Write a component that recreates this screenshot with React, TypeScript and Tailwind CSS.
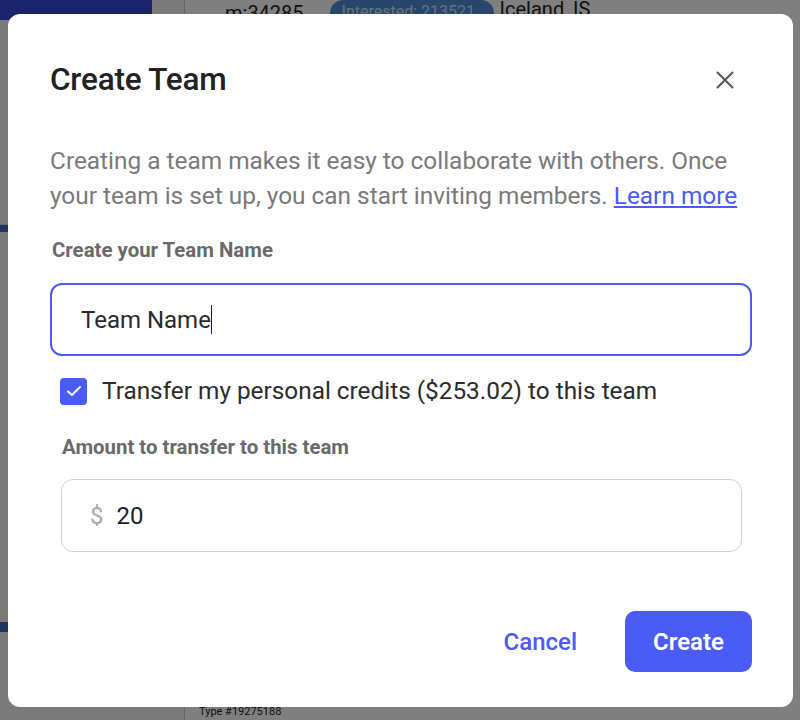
import React from 'react';

const font = { fontFamily: 'Roboto, "Noto Sans", sans-serif' };

const Backdrop: React.FC = () => (
  <div className="absolute inset-0 flex bg-white">
    <div className="w-[152px] flex flex-col">
      <div className="h-[20px] bg-[#3447d8]" />
      <div className="flex-1 bg-[#f4f4f4] flex flex-col">
        <div className="h-[205px] border-b border-[#ddd]" />
        <div className="h-[7px] bg-[#3b6fc4]" />
        <div className="h-[390px]" />
        <div className="h-[10px] bg-[#3b6fc4]" />
      </div>
    </div>
    <div className="w-[33px] border-r border-[#ccc] bg-[#f4f4f4]" />
    <div className="flex-1 flex flex-col">
      <div className="flex items-start gap-[26px] pl-[40px] h-[40px] text-[20px] text-[#222]">
        <span className="-mt-[2px]">m:34285</span>
        <span className="flex items-center gap-[6px]">
          <span className="h-[26px] w-[164px] rounded-full bg-[#4c8fd6] text-[#cfe0f4] text-[16px] px-3">Interested: 213521</span>
          <span className="-mt-[8px]">Iceland, IS</span>
        </span>
      </div>
      <div className="flex-1" />
      <div className="h-[16px] pl-[14px] text-[11px] text-[#222]">Type #19275188</div>
    </div>
  </div>
);

const App: React.FC = () => {
  return (
    <div className="relative w-[800px] h-[720px] overflow-hidden" style={font}>
      <Backdrop />
      <div className="absolute inset-0 bg-black/50" />

      <div className="absolute left-[8px] top-[14px] w-[785px] h-[693px] bg-white rounded-[12px] pt-[48px] pb-[35px] pl-[42px] pr-[41px] flex flex-col">
        <div className="flex items-center justify-between">
          <h2 className="text-[31.5px] leading-[36px] font-medium text-[#222] tracking-[-0.2px]">Create Team</h2>
          <button className="w-[34px] h-[34px] flex items-center justify-center mr-[10px]">
            <svg width="18" height="18" viewBox="0 0 18 18" fill="none" stroke="#555" strokeWidth="2" strokeLinecap="round">
              <path d="M1.5 1.5 L16.5 16.5 M16.5 1.5 L1.5 16.5" />
            </svg>
          </button>
        </div>

        <p className="mt-[45px] text-[24.4px] leading-[35px] text-[#7a7a7a]">
          Creating a team makes it easy to collaborate with others. Once your team is set up, you can start inviting members.{' '}
          <a className="text-[#4a5cf2] underline underline-offset-[2px]">Learn more</a>
        </p>

        <label className="mt-[25px] ml-[2px] text-[20.4px] leading-[24px] font-bold text-[#6a6a6a]">Create your Team Name</label>

        <div className="mt-[21px] h-[73px] rounded-[12px] border-2 border-[#4a5cf2] flex items-center pl-[29px]">
          <span className="text-[24px] text-[#2b2b2b]">Team Name</span>
          <span className="w-px h-[29px] bg-[#222]" />
        </div>

        <div className="mt-[20px] px-[10px] flex flex-col">
          <div className="flex items-center gap-[15px] h-[30px]">
            <span className="w-[27px] h-[27px] rounded-[4px] bg-[#4a5cf5] flex items-center justify-center">
              <svg width="18" height="18" viewBox="0 0 18 18" fill="none" stroke="white" strokeWidth="2" strokeLinecap="round" strokeLinejoin="round">
                <path d="M3 9.5 L7 13 L15 5" />
              </svg>
            </span>
            <span className="text-[24.35px] text-[#2b2b2b]">Transfer my personal credits ($253.02) to this team</span>
          </div>

          <label className="mt-[29px] ml-[2px] text-[20.4px] leading-[24px] font-bold text-[#6a6a6a]">Amount to transfer to this team</label>

          <div className="mt-[20px] ml-[1px] h-[73px] rounded-[12px] border border-[#d2d2d2] flex items-center pl-[28px] gap-[13px]">
            <span className="text-[24px] text-[#aaa]">$</span>
            <span className="text-[24px] text-[#222]">20</span>
          </div>
        </div>

        <div className="mt-auto flex items-center justify-end gap-[24px]">
          <button className="px-[24px] h-[61px] text-[24px] font-medium text-[#4a5cf2]">Cancel</button>
          <button className="w-[127px] h-[61px] rounded-[10px] bg-[#4a5cf5] text-[24px] font-semibold text-white">Create</button>
        </div>
      </div>
    </div>
  );
};

export default App;
